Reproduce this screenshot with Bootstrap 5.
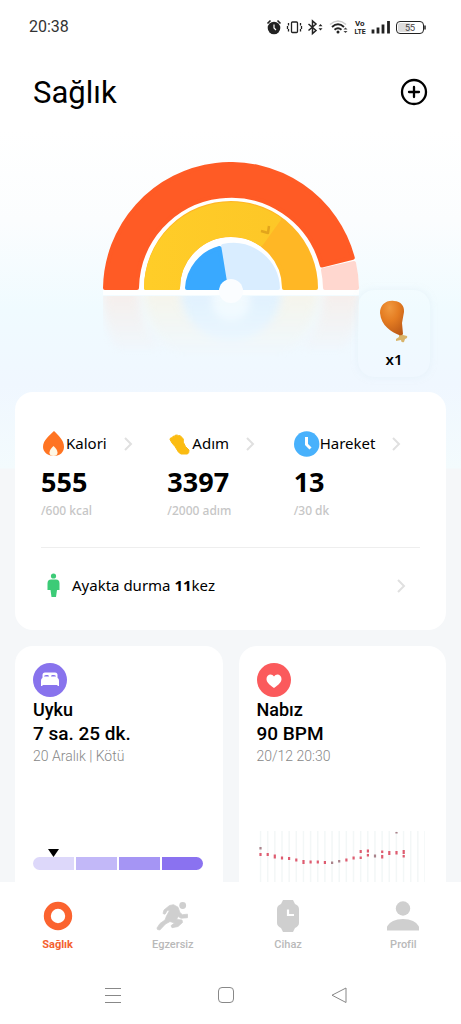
<!DOCTYPE html>
<html lang="tr">
<head>
<meta charset="utf-8">
<meta name="viewport" content="width=device-width, initial-scale=1">
<title>Sağlık</title>
<link href="https://cdn.jsdelivr.net/npm/bootstrap@5.3.0/dist/css/bootstrap.min.css" rel="stylesheet">
<style>
  body { font-family: Roboto, "Liberation Sans", sans-serif; color: #000; background: #fff; }
  svg { display: block; flex: none; }
  .app-main { background: linear-gradient(#fff 0, #fff 130px, #fbfdfe 220px, #f0fbff 310px, #f0f7ff 385px, #f3fbfd 468px, #f5f7f9 469px); }
  .status-bar { height: 54px; padding: 0 35px 0 29px; color: #333; font-size: 16px; }
  .page-head { height: 76px; padding: 0 33px 0 33px; }
  .page-title { font-size: 31px; line-height: 40px; font-weight: 400; padding-top: 2px; }
  .rings { padding-top: 32px; height: 262px; }
  .reward { right: 31px; bottom: 15px; width: 72px; height: 87px; border-radius: 16px; background: #f7fdff; box-shadow: 0 0 6px #dcecf480; color: #000; font-size: 15px; }
  .mi-text { font-family: "Noto Sans", sans-serif; }
  .stack-area { padding: 0 15px; }
  .panel { background: #fff; border-radius: 18px; }
  .metrics { padding: 36px 26px 0; height: 238px; }
  .metric, .standing { color: #000; text-decoration: none; }
  .metric-name { height: 31px; font-size: 15px; line-height: 31px; }
  .metric-value { font-size: 27px; line-height: 32px; font-weight: 700; margin-top: 7px; }
  .metric-goal { font-size: 12px; line-height: 16px; font-weight: 500; color: #c6c6c6; margin-top: 5px; }
  .standing { border-top: 1px solid #eee; margin-top: 28px; height: 76px; font-size: 15px; padding: 0 14px 0 6px; }
  .name-gap { margin-left: 17px; }
  .tile-card { padding: 17px 20px 0 18px; height: 260px; }
  .tile-name { font-size: 18px; line-height: 24px; font-weight: 500; padding-top: 1px; }
  .tile-value { font-size: 19px; line-height: 24px; font-weight: 500; }
  .tile-note { font-size: 14px; line-height: 20px; font-weight: 300; color: #888; }
  .sleep-chart { margin-top: 83px; }
  .sleep-bar { height: 13px; border-radius: 7px; overflow: hidden; }
  .pulse-chart { margin-top: 65px; }
  .marker { margin-left: 14px; }
  .tab-bar { height: 88px; padding-top: 17px; background: #fff; }
  .tab-link { color: #b9b9b9; font-size: 11px; line-height: 16px; font-weight: 500; text-decoration: none; }
  .tab-link.active { color: #f4612f; font-weight: 700; }
  .system-bar { height: 54px; padding-right: 9px; background: #fff; }
  .plain-btn { border: 0; background: none; padding: 0; color: #000; }
</style>
</head>
<body>
<div class="vh-100 d-flex flex-column overflow-hidden">
  <main class="app-main flex-fill overflow-hidden">
    <div class="status-bar d-flex align-items-center justify-content-between">
      <span>20:38</span>
      <svg width="160" height="18" viewBox="0 0 160 18" fill="none" stroke="#222" role="img" aria-label="Durum">
        <circle cx="8" cy="10" r="6.300" fill="#222" stroke="none"/><path d="M1.500 5.500l3-3M14.500 5.500l-3-3" stroke-width="1.600"/><path d="M8 6.500V10l2 2" stroke="#fff" stroke-width="1.200"/>
        <rect x="25.500" y="4" width="6" height="10.500" rx="1" stroke-width="1.300"/><path d="M22.500 5v2.500M21.500 8v3M22.500 11v2.500M34.500 5v2.500M35.500 8v3M34.500 11v2.500" stroke-width="1.300"/>
        <path d="M42.500 6l7.500 6.500-3.500 3V3l3.500 3-7.500 6.500" stroke-width="1.500"/><path d="M52.500 8.300l2-2.300 2 2.300zM52.500 10.300l2 2.300 2-2.300z" fill="#222" stroke="none"/>
        <path d="M64 6.500q8-7 16 0" stroke="#ccc" stroke-width="1.600"/><path d="M66 9q6-5.500 12 0M68.500 11.700q3.500-3 7 0" stroke-width="1.900"/><circle cx="72" cy="14" r="1.500" fill="#222" stroke="none"/><path d="M77.500 11.500l2-2 2 2zM77.500 13l2 2 2-2z" fill="#444" stroke="none"/>
        <g fill="#222" stroke="none" font-family="Roboto, sans-serif" font-weight="700" font-size="8"><text x="89" y="8">Vo</text><text x="88.500" y="15.500" font-size="7">LTE</text></g>
        <path d="M107 11.500v4M112 9.500v6M117 6.500v9M122.500 3v12.500" stroke-width="2.800"/>
        <rect x="130.500" y="3.500" width="27" height="12" rx="3.500"/><rect x="132" y="5" width="13" height="9" rx="2" fill="#ddd" stroke="none"/><path d="M159 7.500v4" stroke-width="1.500"/>
        <text x="144" y="13" fill="#444" stroke="none" text-anchor="middle" font-family="Roboto, sans-serif" font-size="9">55</text>
      </svg>
    </div>

    <header class="page-head d-flex align-items-center justify-content-between">
      <h1 class="page-title mb-0">Sağlık</h1>
      <button type="button" class="plain-btn" aria-label="Ekle">
        <svg width="28" height="28" viewBox="0 0 28 28" fill="none" stroke="#000" stroke-width="2.300" stroke-linecap="round"><circle cx="14" cy="14" r="12"/><path d="M14 9v10M9 14h10"/></svg>
      </button>
    </header>

    <section class="rings position-relative">
      <svg class="mx-auto" width="256" height="218" viewBox="0 0 256 218" role="img" aria-label="Günlük halkalar">
        <defs>
          <linearGradient id="fade" x1="0" y1="0" x2="0" y2="1"><stop offset="0" stop-color="#fff" stop-opacity=".6"/><stop offset="1" stop-color="#fff" stop-opacity="0"/></linearGradient>
          <linearGradient id="gold" x1="0" x2="1"><stop offset="0" stop-color="#ffcd28"/><stop offset="1" stop-color="#fdc727"/></linearGradient>
          <mask id="fadeMask"><rect y="134" width="256" height="62" fill="url(#fade)"/></mask>
          <filter id="soft"><feGaussianBlur stdDeviation="4"/></filter>
        </defs>
        <g mask="url(#fadeMask)"><g filter="url(#soft)">
          <path d="M0 128h36a92 92 0 0 0 24 62H14A128 128 0 0 1 0 128zM220 128h36a128 128 0 0 1-14 62h-46a92 92 0 0 0 24-62z" fill="#f8e6e0"/>
          <path d="M41 128h36a51 51 0 0 0 102 0h36a87 87 0 0 1-174 0z" fill="#f8f0df"/>
          <path d="M78 130h100a50 50 0 0 1-100 0z" fill="#d5eafd"/>
          <circle cx="128" cy="140" r="19" fill="#f2f9fe"/>
        </g></g>
        <path d="M0 128A128 128 0 0 1 256 128v5H0z" fill="#fff" opacity=".9"/>
        <g stroke-width="4" stroke-linejoin="round">
          <path d="M251 101A126 126 0 0 1 254 126H222A94 94 0 0 0 220 108Z" fill="#ffd7cf" stroke="#ffd7cf"/>
          <path d="M2 126A126 126 0 0 1 249.800 95.800L218.800 103.500A94 94 0 0 0 34 126Z" fill="#ff5b25" stroke="#ff5b25"/>
          <path d="M43 126A85 85 0 0 1 213 126H181A53 53 0 0 0 75 126Z" fill="#ffb725" stroke="#ffb725"/>
          <path d="M43 126A85 85 0 0 1 176 57L158 82A53 53 0 0 0 75 126Z" fill="url(#gold)" stroke="url(#gold)"/>
          <path d="M158 69l7 2 1-7" fill="none" stroke="#e2a51c" stroke-width="2.500"/>
          <path d="M120 84A45 45 0 0 1 175 126H123Z" fill="#d9edff" stroke="#d9edff"/>
          <path d="M84 126A44 44 0 0 1 116.500 86L123 126Z" fill="#39a9ff" stroke="#39a9ff"/>
        </g>
        <circle cx="128" cy="129" r="12" fill="#fbfdff"/>
      </svg>
      <button type="button" class="reward plain-btn position-absolute d-flex flex-column align-items-center pt-2">
        <svg width="34" height="48" viewBox="0 0 34 48">
          <defs><radialGradient id="meat" cx=".4" cy=".2" r=".85"><stop offset="0" stop-color="#f0993f"/><stop offset=".45" stop-color="#e57d22"/><stop offset="1" stop-color="#bd5a17"/></radialGradient></defs>
          <path d="M22 34l4 3 4 1q1 2-2 3l-1 3q-3 1-3-2l-5 1v-2l3-2z" fill="#d9b46a"/>
          <path d="M3 15C3 7 9 2 17 3c7 .5 10.500 5 10 11l-2 11 1 11q-1 2-4 1C15 34 4 28 3 15z" fill="url(#meat)"/>
        </svg>
        <span class="mi-text fw-semibold lh-sm mt-1">x1</span>
      </button>
    </section>

    <div class="stack-area">
      <section class="panel metrics mi-text">
        <div class="row g-0">
          <a href="#" class="metric col-4">
            <div class="metric-name d-flex align-items-center">
              <svg width="25" height="26" viewBox="0 0 25 26"><path d="M13 0c4 4 10 9 10 16 0 5-4 9-10 9S2 21 2 16C2 9 9 4 13 0z" fill="#ff7422"/><path d="M12.500 15c2 2 4 4 4 6.500 0 2-1 3.500-4 3.500s-4-1.500-4-3.500c0-2.500 2-4.500 4-6.500z" fill="#fff8e6"/></svg>
              <span>Kalori</span>
              <svg class="name-gap" width="9" height="14" viewBox="0 0 9 14" fill="none" stroke="#e0e0e0" stroke-width="2"><path d="M1 1l6 6-6 6"/></svg>
            </div>
            <div class="metric-value">555</div>
            <div class="metric-goal">/600 kcal</div>
          </a>
          <a href="#" class="metric col-4">
            <div class="metric-name d-flex align-items-center">
              <svg width="25" height="26" viewBox="0 0 25 26"><path d="M3 8.500L3.500 7 5 6.800 6 5.300 7.500 5.200 8.500 4l2 .2 1.500.8 1-.6 1.500 1.600 1.800 2v3.200l2.200 4.300 3.500 3.500-.3 2.500-1.200 1.500h-6.500l-2.500-1.800L8 15.500 5 12z" fill="#fbbc12" stroke="#fbbc12" stroke-linejoin="round"/></svg>
              <span>Adım</span>
              <svg class="name-gap" width="9" height="14" viewBox="0 0 9 14" fill="none" stroke="#e0e0e0" stroke-width="2"><path d="M1 1l6 6-6 6"/></svg>
            </div>
            <div class="metric-value">3397</div>
            <div class="metric-goal">/2000 adım</div>
          </a>
          <a href="#" class="metric col-4">
            <div class="metric-name d-flex align-items-center">
              <svg width="26" height="26" viewBox="0 0 26 26"><circle cx="12.700" cy="13" r="12.700" fill="#48b1fc"/><path d="M12.500 6v7.500l4 4" fill="none" stroke="#fff" stroke-width="3"/></svg>
              <span>Hareket</span>
              <svg class="name-gap" width="9" height="14" viewBox="0 0 9 14" fill="none" stroke="#e0e0e0" stroke-width="2"><path d="M1 1l6 6-6 6"/></svg>
            </div>
            <div class="metric-value">13</div>
            <div class="metric-goal">/30 dk</div>
          </a>
        </div>
        <a href="#" class="standing d-flex align-items-center">
          <svg width="13" height="25" viewBox="0 0 13 25" fill="#3ccb77"><circle cx="6.500" cy="3" r="2.600"/><path d="M4 6.500h5q3.500 0 3.500 4V17H10l-1 7H4.500L3.500 17H.5v-6.500q0-4 3.500-4z"/></svg>
          <span class="ms-2 ps-1">Ayakta durma <b>11</b>kez</span>
          <svg class="ms-auto" width="9" height="14" viewBox="0 0 9 14" fill="none" stroke="#e0e0e0" stroke-width="2"><path d="M1 1l6 6-6 6"/></svg>
        </a>
      </section>

      <div class="row gx-3 pt-3">
        <div class="col-6">
          <section class="panel tile-card">
            <svg width="34" height="34" viewBox="0 0 34 34"><circle cx="17" cy="17" r="17" fill="#8873ed"/><path d="M9.500 15v-3q0-2.500 2.500-2.500h10q2.500 0 2.500 2.500v3z" fill="#fff"/><path d="M11 13.500q0-1.500 2-1.500h1.700q1.300 0 1.300 1.500zM18 13.500q0-1.500 1.300-1.500H21q2 0 2 1.500z" fill="#8873ed"/><path d="M8 18q0-3.500 3-3.500h12q3 0 3 3.500v5h-1.500v-1h-15v1H8z" fill="#fff"/></svg>
            <h2 class="tile-name mb-0">Uyku</h2>
            <div class="tile-value">7 sa. 25 dk.</div>
            <div class="tile-note">20 Aralık | Kötü</div>
            <div class="sleep-chart">
              <svg class="marker" width="13" height="8" viewBox="0 0 13 8"><path d="M1 0h11L6.500 8z"/></svg>
              <div class="sleep-bar d-flex">
                <div class="flex-fill" style="background:#ddd8fa"></div><div class="flex-fill" style="background:#c2b8f8;margin-left:2px"></div><div class="flex-fill" style="background:#a595f4;margin-left:2px"></div><div class="flex-fill" style="background:#8a72f0;margin-left:2px"></div>
              </div>
            </div>
          </section>
        </div>
        <div class="col-6">
          <section class="panel tile-card">
            <svg width="34" height="34" viewBox="0 0 34 34"><circle cx="17" cy="17" r="17" fill="#fb5a5c"/><path d="M17 25c-5-3.500-7.500-6-7.500-9 0-5 5.500-6 7.500-2.500 2-3.500 7.500-2.500 7.500 2.500 0 3-2.500 5.500-7.500 9z" fill="#fff"/></svg>
            <h2 class="tile-name mb-0">Nabız</h2>
            <div class="tile-value">90 BPM</div>
            <div class="tile-note">20/12 20:30</div>
            <svg class="pulse-chart" width="168" height="60" viewBox="0 0 168 60" fill="none" role="img" aria-label="Nabız grafiği">
              <path d="M2.800 30H169" stroke="#f3f7f7" stroke-width="60" stroke-dasharray="1.500 5.650"/>
              <g stroke="#de5c70" stroke-width="2.200"><path d="M3.500 22v3M10.700 22v3M17.800 23.500v4M25 25.500v3M32.100 26v3M39.300 27.500v3M46.500 29v4M53.600 29.500v3M60.800 29.500v3M67.900 30v3M89.400 27.500v3M96.600 25.500v3M103.700 19v3M103.700 25.500v2.500M110.900 18.500v3M110.900 23v2.500M125.200 19.500v2.500M125.200 24v3.500M132.300 20v4M139.500 20v3.500M146.700 19v4M146.700 24v2.500"/><path d="M3.500 16v2.500M75.100 30.500v2.500M82.200 29v2.500M118 23.500v3M139.500 1v1.500" stroke="#a9838b"/></g>
            </svg>
          </section>
        </div>
      </div>
    </div>
  </main>

  <nav class="tab-bar flex-shrink-0">
    <div class="row g-0 text-center">
      <a href="#" class="tab-link active col-3" aria-current="page">
        <svg class="mx-auto mb-1" width="34" height="34" viewBox="0 0 34 34"><circle cx="17" cy="17" r="10.700" fill="none" stroke="#fb632f" stroke-width="7"/></svg>Sağlık</a>
      <a href="#" class="tab-link col-3">
        <svg class="mx-auto mb-1" width="34" height="34" viewBox="0 0 34 34" fill="#cfcfcf"><circle cx="26.700" cy="6.500" r="3.400"/><path d="M13.500 6.500l4-.8 4.500 2.500 2 5.500 2.500 2 5-.5v3.500l-6.500.5-2.700-1.700-1.800 3 5.500.5.500 2.500-4.500 4-6 1.200-1-2 3.500-2.700-4.500-1.500-4.500 2.500-5.700 6-2.300-.5-.5-1.500 3-4.500 5-3.500 1.500-4 3-5.500-2-.3-2.500 4-2-.7 1-3.500z" stroke="#cfcfcf" stroke-width=".8" stroke-linejoin="round"/></svg>Egzersiz</a>
      <a href="#" class="tab-link col-3">
        <svg class="mx-auto mb-1" width="34" height="34" viewBox="0 0 34 34"><path d="M12 1h10l2 4q4 1.500 4 5v14q0 3-4 5l-2 4H12l-2-4q-4-2-4-5V10q0-3.500 4-5z" fill="#cfcfcf"/><path d="M17 10.500V16h6" fill="none" stroke="#fff" stroke-width="2.200"/></svg>Cihaz</a>
      <a href="#" class="tab-link col-3">
        <svg class="mx-auto mb-1" width="34" height="34" viewBox="0 0 34 34" fill="#cfcfcf"><circle cx="17" cy="9.500" r="7.200"/><path d="M1 31.500v-4Q5 20 17 20t16 7.500v4z"/></svg>Profil</a>
    </div>
  </nav>
  <div class="system-bar flex-shrink-0 d-flex justify-content-center pb-1">
    <div class="col-3 d-flex justify-content-center"><button type="button" class="plain-btn" aria-label="Menü"><svg width="18" height="18" viewBox="0 0 18 18" stroke="#888"><path d="M1 2.500h16M1 9.500h16M1 16.500h16"/></svg></button></div>
    <div class="col-3 d-flex justify-content-center"><button type="button" class="plain-btn" aria-label="Ana ekran"><svg width="18" height="18" viewBox="0 0 18 18" fill="none" stroke="#888"><rect x="1.500" y="1.500" width="15" height="15" rx="3.500"/></svg></button></div>
    <div class="col-3 d-flex justify-content-center"><button type="button" class="plain-btn" aria-label="Geri"><svg width="18" height="18" viewBox="0 0 18 18" fill="none" stroke="#888" stroke-linejoin="round"><path d="M16 2v14.500L2 9.200z"/></svg></button></div>
  </div>
</div>
<script src="https://cdn.jsdelivr.net/npm/bootstrap@5.3.0/dist/js/bootstrap.bundle.min.js"></script>
</body>
</html>
